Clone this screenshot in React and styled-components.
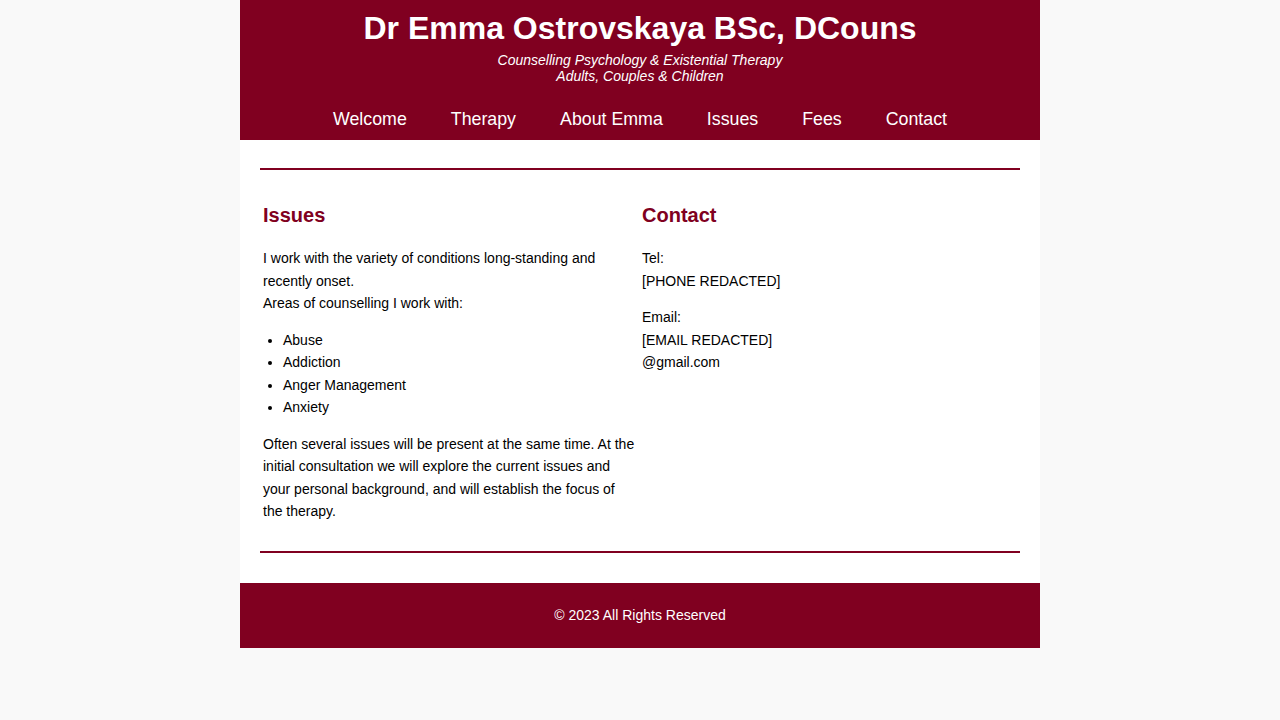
import React from "react";
import styled, { createGlobalStyle } from "styled-components";

const BRAND = "#800020";

const GlobalStyle = createGlobalStyle`
  html, body {
    margin: 0;
    padding: 0;
    background: #f9f9f9;
    font-family: "Liberation Sans", Arial, Helvetica, sans-serif;
    color: #000;
  }
  * { box-sizing: border-box; }
`;

const Page = styled.div`
  width: 800px;
  margin: 0 auto;
`;

const Header = styled.header`
  background: ${BRAND};
  color: #fff;
  text-align: center;
  padding: 10px 0 11px;
`;

const Title = styled.h1`
  margin: 0;
  font-size: 32px;
  line-height: 36px;
  font-weight: bold;
`;

const Tagline = styled.p`
  margin: 6px 0 0;
  font-size: 14px;
  line-height: 16px;
  font-style: italic;
`;

const Nav = styled.nav`
  display: flex;
  justify-content: center;
  gap: 44px;
  margin-top: 25px;
`;

const NavLink = styled.a`
  color: #fff;
  text-decoration: none;
  font-size: 17.8px;
  line-height: 20px;
`;

const Main = styled.main`
  background: #fff;
  padding: 20px 20px 22px;
`;

const Rule = styled.hr`
  border: none;
  height: 2px;
  background: ${BRAND};
  margin: ${(p) => (p.$bottom ? "14px 0 8px" : "8px 0 0")};
`;

const Columns = styled.div`
  display: grid;
  grid-template-columns: 1fr 1fr;
  padding-top: 34px;
`;

const Column = styled.section`
  padding: 0 3px 0 ${(p) => (p.$right ? "2px" : "3px")};
  font-size: 14px;
  line-height: 22.5px;
`;

const Heading = styled.h2`
  margin: 0 0 20px;
  font-size: 20px;
  line-height: 23px;
  font-weight: bold;
  color: ${BRAND};
`;

const Para = styled.p`
  margin: 14px 0;
`;

const List = styled.ul`
  margin: 14px 0;
  padding-left: 20px;
`;

const Footer = styled.footer`
  background: ${BRAND};
  color: #fff;
  text-align: center;
  font-size: 14px;
  line-height: 16px;
  padding: 24px 0 25px;
`;

const issues = ["Abuse", "Addiction", "Anger Management", "Anxiety"];
const navItems = ["Welcome", "Therapy", "About Emma", "Issues", "Fees", "Contact"];

export default function App() {
  return (
    <>
      <GlobalStyle />
      <Page>
        <Header>
          <Title>Dr Emma Ostrovskaya BSc, DCouns</Title>
          <Tagline>
            Counselling Psychology &amp; Existential Therapy
            <br />
            Adults, Couples &amp; Children
          </Tagline>
          <Nav>
            {navItems.map((n) => (
              <NavLink key={n} href="#">
                {n}
              </NavLink>
            ))}
          </Nav>
        </Header>
        <Main>
          <Rule />
          <Columns>
            <Column>
              <Heading>Issues</Heading>
              <Para>
                I work with the variety of conditions long-standing and recently onset.
                <br />
                Areas of counselling I work with:
              </Para>
              <List>
                {issues.map((i) => (
                  <li key={i}>{i}</li>
                ))}
              </List>
              <Para>
                Often several issues will be present at the same time. At the initial
                consultation we will explore the current issues and your personal
                background, and will establish the focus of the therapy.
              </Para>
            </Column>
            <Column $right>
              <Heading>Contact</Heading>
              <Para>
                Tel:
                <br />
                [PHONE REDACTED]
              </Para>
              <Para>
                Email:
                <br />
                [EMAIL REDACTED]
                <br />
                @gmail.com
              </Para>
            </Column>
          </Columns>
          <Rule $bottom />
        </Main>
        <Footer>© 2023 All Rights Reserved</Footer>
      </Page>
    </>
  );
}
